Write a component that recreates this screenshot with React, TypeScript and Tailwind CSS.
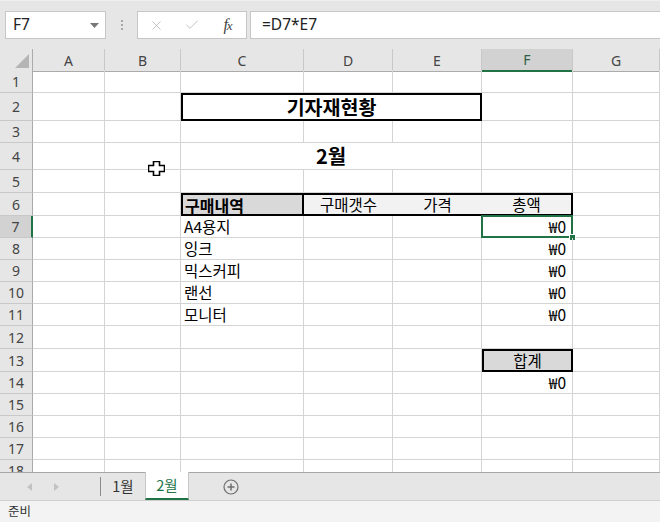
import React from "react";
import { X, Check } from "lucide-react";

const KR = { fontFamily: '"Noto Sans CJK KR", "Noto Sans", sans-serif' };
const UI = { fontFamily: '"Noto Sans", "Liberation Sans", "Noto Sans CJK KR", sans-serif' };

const GRID = "grid grid-cols-[33px_72px_76px_123px_89px_89px_91px_87px]";
const cell = "border-r border-b border-[#d4d4d4]";

const rowH: Record<number, string> = {
  1: "h-[23px]",
  2: "h-[28px]",
  3: "h-[22px]",
  4: "h-[27px]",
  5: "h-[23px]",
  6: "h-[23px]",
  7: "h-[22px]",
  8: "h-[22px]",
  9: "h-[22px]",
  10: "h-[22px]",
  11: "h-[22px]",
  12: "h-[23px]",
  13: "h-[23px]",
  14: "h-[22px]",
  15: "h-[22px]",
  16: "h-[22px]",
  17: "h-[22px]",
  18: "h-[22px]",
};

const items: Record<number, string> = { 7: "A4용지", 8: "잉크", 9: "믹스커피", 10: "랜선", 11: "모니터" };

function RowHeader({ n }: { n: number }) {
  const sel = n === 7;
  return (
    <div
      className={
        "flex items-center justify-center text-[14px] text-[#444] border-b border-[#c8c8c8] " +
        (sel ? "bg-[#d2d2d2] border-r-2 border-r-[#217346]" : "bg-[#e6e6e6] border-r border-r-[#ababab]")
      }
      style={UI}
    >
      {n}
    </div>
  );
}

function Empty() {
  return <div className={cell} />;
}

function Won({ selected }: { selected?: boolean }) {
  return (
    <div className={cell + " relative flex items-center justify-end pr-[6px] text-[15.5px] text-black"} style={KR}>
      <span className="leading-none">₩0</span>
      {selected && (
        <>
          <div className="absolute -left-[1px] -top-[1px] -right-[1px] -bottom-[1px] border-2 border-[#217346]" />
          <div className="absolute -right-[4px] -bottom-[4px] w-[7px] h-[7px] bg-[#217346] border border-white" />
        </>
      )}
    </div>
  );
}

function Row({ n }: { n: number }) {
  const h = rowH[n];
  let content: React.ReactNode;
  if (n === 2) {
    content = (
      <>
        <Empty />
        <Empty />
        <div className="col-span-3 border-2 border-black flex items-center justify-center text-[19.5px] font-bold text-black" style={KR}>
          <span className="leading-none">기자재현황</span>
        </div>
        <Empty />
        <Empty />
      </>
    );
  } else if (n === 4) {
    content = (
      <>
        <Empty />
        <Empty />
        <div className={cell + " col-span-3 flex items-center justify-center text-[20px] font-bold text-black"} style={KR}>
          <span className="leading-none">2월</span>
        </div>
        <Empty />
        <Empty />
      </>
    );
  } else if (n === 6) {
    content = (
      <>
        <Empty />
        <Empty />
        <div className="border-2 border-black bg-[#d9d9d9] flex items-center pl-[2px] text-[16px] font-bold text-black" style={KR}>
          <span className="leading-none">구매내역</span>
        </div>
        <div className="border-y-2 border-black bg-[#f2f2f2] flex items-center justify-center text-[15.5px] text-black" style={KR}>
          <span className="leading-none">구매갯수</span>
        </div>
        <div className="border-y-2 border-black bg-[#f2f2f2] flex items-center justify-center text-[15.5px] text-black" style={KR}>
          <span className="leading-none">가격</span>
        </div>
        <div className="border-y-2 border-r-2 border-black bg-[#f2f2f2] flex items-center justify-center text-[15.5px] text-black" style={KR}>
          <span className="leading-none">총액</span>
        </div>
        <Empty />
      </>
    );
  } else if (items[n]) {
    content = (
      <>
        <Empty />
        <Empty />
        <div className={cell + " flex items-center pl-[3px] text-[15.5px] text-black"} style={KR}>
          <span className="leading-none">{items[n]}</span>
        </div>
        <Empty />
        <Empty />
        <Won selected={n === 7} />
        <Empty />
      </>
    );
  } else if (n === 13) {
    content = (
      <>
        <Empty />
        <Empty />
        <Empty />
        <Empty />
        <Empty />
        <div className="border-2 border-black bg-[#d9d9d9] flex items-center justify-center text-[15.5px] text-black" style={KR}>
          <span className="leading-none">합계</span>
        </div>
        <Empty />
      </>
    );
  } else if (n === 14) {
    content = (
      <>
        <Empty />
        <Empty />
        <Empty />
        <Empty />
        <Empty />
        <Won />
        <Empty />
      </>
    );
  } else {
    content = (
      <>
        <Empty />
        <Empty />
        <Empty />
        <Empty />
        <Empty />
        <Empty />
        <Empty />
      </>
    );
  }
  return (
    <div className={GRID + " " + h + " shrink-0"}>
      <RowHeader n={n} />
      {content}
    </div>
  );
}

function ColHeader({ l, sel }: { l: string; sel?: boolean }) {
  return (
    <div
      className={
        "flex items-center justify-center text-[14px] border-r border-[#c8c8c8] " +
        (sel ? "bg-[#d2d2d2] text-[#2e5e45] border-b-2 border-b-[#217346]" : "bg-[#e6e6e6] text-[#444] border-b border-b-[#ababab]")
      }
      style={UI}
    >
      {l}
    </div>
  );
}

export default function App() {
  const rows = Array.from({ length: 18 }, (_, i) => i + 1);
  return (
    <div className="w-[660px] h-[522px] overflow-hidden flex flex-col bg-white relative select-none">
      {/* formula bar */}
      <div className="h-[49px] shrink-0 bg-[#e6e6e6] border-t border-[#f0f0f0] flex items-start pt-[10px]">
        <div className="ml-[5px] w-[101px] h-[28px] bg-white border border-[#c6c6c6] flex items-center justify-between pl-[7px] pr-[6px]">
          <span className="text-[15.5px] text-[#222]" style={UI}>F7</span>
          <svg width="9" height="5" viewBox="0 0 9 5">
            <polygon points="0,0 9,0 4.5,5" fill="#777" />
          </svg>
        </div>
        <div className="w-[31px] h-[28px] flex flex-col items-center justify-center gap-[2px]">
          <div className="w-[2px] h-[2px] bg-[#a8a8a8]" />
          <div className="w-[2px] h-[2px] bg-[#a8a8a8]" />
          <div className="w-[2px] h-[2px] bg-[#a8a8a8]" />
        </div>
        <div className="w-[110px] h-[28px] bg-white border border-[#c6c6c6] flex items-center">
          <span className="w-[36px] flex justify-center"><X size={15} strokeWidth={1.3} color="#b8b8b8" /></span>
          <span className="w-[36px] flex justify-center"><Check size={16} strokeWidth={1.3} color="#b8b8b8" /></span>
          <span
            className="w-[36px] flex justify-center items-baseline text-[16px] italic text-[#444] leading-none"
            style={{ fontFamily: '"Liberation Serif", serif' }}
          >
            <span>f</span>
            <span className="text-[13px] -ml-[1px]">x</span>
          </span>
        </div>
        <div className="ml-[3px] flex-1 h-[28px] bg-white border-y border-l border-[#c6c6c6] flex items-center pl-[11px]">
          <span className="text-[15.5px] text-[#222]" style={UI}>=D7*E7</span>
        </div>
      </div>

      {/* grid */}
      <div className="h-[423px] shrink-0 overflow-hidden flex flex-col">
        <div className={GRID + " h-[21px] shrink-0"}>
          <div className="bg-[#e6e6e6] border-r border-r-[#ababab] border-b border-b-[#ababab] flex items-end justify-end pr-[3px] pb-[3px]">
            <svg width="14" height="14" viewBox="0 0 14 14">
              <polygon points="14,0 14,14 0,14" fill="#b5b5b5" />
            </svg>
          </div>
          <ColHeader l="A" />
          <ColHeader l="B" />
          <ColHeader l="C" />
          <ColHeader l="D" />
          <ColHeader l="E" />
          <ColHeader l="F" sel />
          <ColHeader l="G" />
        </div>
        {rows.map((n) => (
          <Row key={n} n={n} />
        ))}
      </div>

      {/* sheet tabs */}
      <div className="h-[28px] shrink-0 bg-[#e6e6e6] border-t border-[#a6a6a6] flex items-stretch">
        <div className="w-[100px] flex items-center">
          <svg className="ml-[27px]" width="5" height="8" viewBox="0 0 5 8">
            <polygon points="5,0 5,8 0,4" fill="#c2c2c2" />
          </svg>
          <svg className="ml-[22px]" width="5" height="8" viewBox="0 0 5 8">
            <polygon points="0,0 0,8 5,4" fill="#c2c2c2" />
          </svg>
        </div>
        <div className="w-px my-[4px] bg-[#8a8a8a]" />
        <div className="w-[44px] flex items-center justify-center text-[14.5px] text-[#333] -mt-[2px]" style={KR}>1월</div>
        <div className="w-[44px] bg-white border-x border-[#c6c6c6] border-b-2 border-b-[#217346] -mt-px flex items-center justify-center text-[14.5px] text-[#217346]" style={KR}>
          2월
        </div>
        <div className="ml-[34px] flex items-center">
          <svg width="16" height="16" viewBox="0 0 16 16">
            <circle cx="8" cy="8" r="7" fill="none" stroke="#6e6e6e" strokeWidth="1.2" />
            <line x1="8" y1="4.5" x2="8" y2="11.5" stroke="#6e6e6e" strokeWidth="1.5" />
            <line x1="4.5" y1="8" x2="11.5" y2="8" stroke="#6e6e6e" strokeWidth="1.5" />
          </svg>
        </div>
      </div>

      {/* status bar */}
      <div className="h-[22px] shrink-0 bg-[#f3f3f3] border-t border-[#cfcfcf] flex items-center pl-[8px]">
        <span className="text-[12.5px] text-[#333]" style={KR}>준비</span>
      </div>

      {/* mouse cursor */}
      <svg className="absolute left-[148px] top-[161px] pointer-events-none" width="17" height="15" viewBox="0 0 17 15">
        <path d="M5.5 0.5 H11.5 V4.5 H16.5 V10.5 H11.5 V14.5 H5.5 V10.5 H0.5 V4.5 H5.5 Z" fill="white" stroke="black" strokeWidth="1.6" />
      </svg>
    </div>
  );
}
